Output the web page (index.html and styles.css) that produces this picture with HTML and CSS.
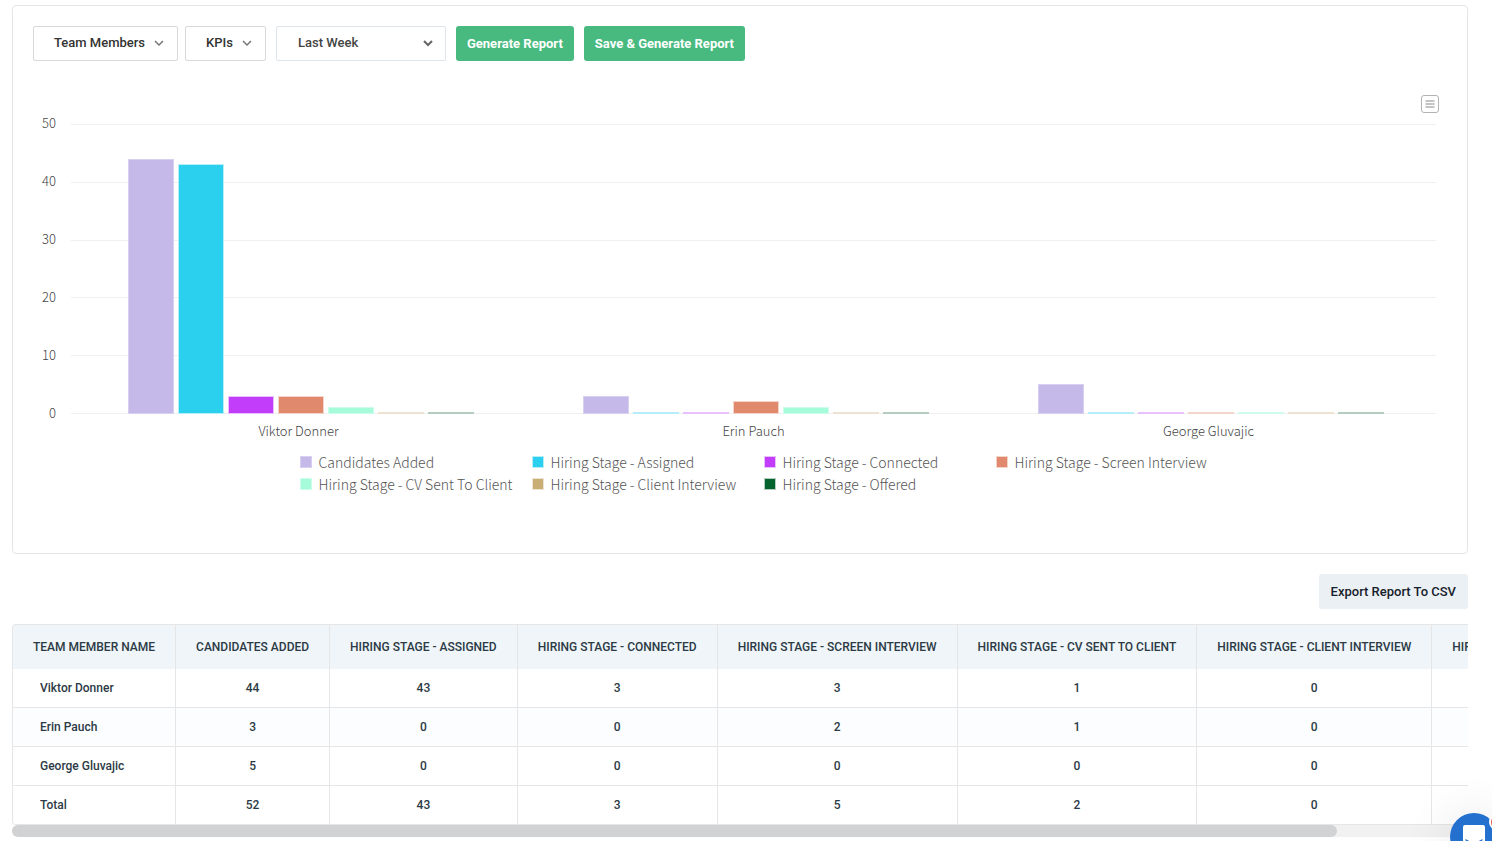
FILE: index.html
```html
<!DOCTYPE html>
<html lang="en">

<head>
    <meta charset="UTF-8">
    <title>Team Report</title>
    <link rel="stylesheet" href="styles.css">
</head>

<body>
    <main>
        <section class="card">
            <form class="filters">
                <button type="button" class="dropdown">Team Members
                    <svg width="10" height="6" viewBox="0 0 10 6"><path d="M1 1l4 4 4-4" /></svg>
                </button>
                <button type="button" class="dropdown">KPIs
                    <svg width="10" height="6" viewBox="0 0 10 6"><path d="M1 1l4 4 4-4" /></svg>
                </button>
                <div class="period">
                    <select aria-label="Period">
                        <option>Last Week</option>
                        <option>Last Month</option>
                    </select>
                    <svg width="10" height="7" viewBox="0 0 10 7"><path d="M1 1l4 4 4-4" /></svg>
                </div>
                <button type="button" class="green">Generate Report</button>
                <button type="button" class="green">Save &amp; Generate Report</button>
            </form>

            <div class="chart">
                <button type="button" class="chart-menu" aria-label="Chart menu">
                    <svg width="18" height="18" viewBox="0 0 18 18">
                        <rect x="0.5" y="0.5" width="17" height="17" rx="2.5" fill="#fff" stroke="#b3b3b3" />
                        <path d="M4.500 6h9M4.500 9h9M4.500 12h9" stroke="#c4c4c4" stroke-width="2" />
                    </svg>
                </button>
                <div class="axis">
                    <span>50</span>
                    <span>40</span>
                    <span>30</span>
                    <span>20</span>
                    <span>10</span>
                    <span>0</span>
                </div>
                <div class="plot">
                    <div class="lines"><i></i><i></i><i></i><i></i><i></i><i></i></div>
                    <div class="group">
                        <div class="bar added" style="--value: 44"></div>
                        <div class="bar assigned" style="--value: 43"></div>
                        <div class="bar connected" style="--value: 3"></div>
                        <div class="bar screen" style="--value: 3"></div>
                        <div class="bar cv" style="--value: 1"></div>
                        <div class="bar client" style="--value: 0"></div>
                        <div class="bar offered" style="--value: 0"></div>
                    </div>
                    <div class="group">
                        <div class="bar added" style="--value: 3"></div>
                        <div class="bar assigned" style="--value: 0"></div>
                        <div class="bar connected" style="--value: 0"></div>
                        <div class="bar screen" style="--value: 2"></div>
                        <div class="bar cv" style="--value: 1"></div>
                        <div class="bar client" style="--value: 0"></div>
                        <div class="bar offered" style="--value: 0"></div>
                    </div>
                    <div class="group">
                        <div class="bar added" style="--value: 5"></div>
                        <div class="bar assigned" style="--value: 0"></div>
                        <div class="bar connected" style="--value: 0"></div>
                        <div class="bar screen" style="--value: 0"></div>
                        <div class="bar cv" style="--value: 0"></div>
                        <div class="bar client" style="--value: 0"></div>
                        <div class="bar offered" style="--value: 0"></div>
                    </div>
                </div>
                <div class="names">
                    <span>Viktor Donner</span>
                    <span>Erin Pauch</span>
                    <span>George Gluvajic</span>
                </div>
                <ul class="legend">
                    <li><i class="added"></i>Candidates Added</li>
                    <li><i class="assigned"></i>Hiring Stage - Assigned</li>
                    <li><i class="connected"></i>Hiring Stage - Connected</li>
                    <li><i class="screen"></i>Hiring Stage - Screen Interview</li>
                    <li><i class="cv"></i>Hiring Stage - CV Sent To Client</li>
                    <li><i class="client"></i>Hiring Stage - Client Interview</li>
                    <li><i class="offered"></i>Hiring Stage - Offered</li>
                </ul>
            </div>
        </section>

        <div class="actions">
            <button type="button" class="export">Export Report To CSV</button>
        </div>

        <div class="table-wrap">
            <table>
                <thead>
                    <tr>
                        <th>Team Member Name</th>
                        <th>Candidates Added</th>
                        <th>Hiring Stage - Assigned</th>
                        <th>Hiring Stage - Connected</th>
                        <th>Hiring Stage - Screen Interview</th>
                        <th>Hiring Stage - CV Sent To Client</th>
                        <th>Hiring Stage - Client Interview</th>
                        <th>Hiring Stage - Offered</th>
                    </tr>
                </thead>
                <tbody>
                    <tr>
                        <td>Viktor Donner</td>
                        <td>44</td>
                        <td>43</td>
                        <td>3</td>
                        <td>3</td>
                        <td>1</td>
                        <td>0</td>
                        <td>0</td>
                    </tr>
                    <tr>
                        <td>Erin Pauch</td>
                        <td>3</td>
                        <td>0</td>
                        <td>0</td>
                        <td>2</td>
                        <td>1</td>
                        <td>0</td>
                        <td>0</td>
                    </tr>
                    <tr>
                        <td>George Gluvajic</td>
                        <td>5</td>
                        <td>0</td>
                        <td>0</td>
                        <td>0</td>
                        <td>0</td>
                        <td>0</td>
                        <td>0</td>
                    </tr>
                    <tr>
                        <td>Total</td>
                        <td>52</td>
                        <td>43</td>
                        <td>3</td>
                        <td>5</td>
                        <td>2</td>
                        <td>0</td>
                        <td>0</td>
                    </tr>
                </tbody>
            </table>
        </div>
        <div class="scroll-track">
            <div class="scroll-thumb"></div>
        </div>
    </main>

    <button type="button" class="chat" aria-label="Open chat">
        <svg width="48" height="48" viewBox="0 0 48 48">
            <path d="M15 12h18a2 2 0 0 1 2 2v23l-6-3H15a2 2 0 0 1-2-2V14a2 2 0 0 1 2-2z" fill="#fff" />
            <path d="M16 27q8 6 16 0" fill="none" stroke="#2470cf" stroke-width="1.500" stroke-linecap="round" />
        </svg>
        <span class="badge"></span>
    </button>
</body>

</html>
```
FILE: styles.css
```css
* {
    box-sizing: border-box;
}

html {
    height: 100%;
    overflow: hidden;
}

body {
    margin: 0;
    height: 100%;
    overflow: hidden;
    background-color: #fff;
    font-family: Roboto, "Liberation Sans", sans-serif;
    font-size: 13px;
    color: #2c3a45;
}

main {
    padding: 5px 24px 0 12px;
}

button,
select {
    font-family: inherit;
    cursor: pointer;
}

.card {
    border: 1px solid #e6e6e6;
    border-radius: 4px;
    padding: 20px 20px 58px;
}

/* filters */
.filters {
    display: flex;
    align-items: center;
}

.dropdown {
    display: flex;
    align-items: center;
    gap: 9px;
    height: 35px;
    margin-right: 7px;
    padding: 0 13px 2px 20px;
    background-color: #fff;
    border: 1px solid #d9d9d9;
    border-radius: 2px;
    font-size: 13px;
    font-weight: 500;
    color: #333;
}

.filters svg {
    fill: none;
    stroke: #777;
    stroke-width: 1.5;
}

.period {
    display: grid;
    align-items: center;
    width: 170px;
    margin: 0 10px 0 3px;
}

.period select,
.period svg {
    grid-area: 1 / 1;
}

.period select {
    appearance: none;
    height: 35px;
    padding: 0 30px 2px 21px;
    background-color: #fff;
    border: 1px solid #dfe5ec;
    border-radius: 2px;
    font-size: 13px;
    font-weight: 500;
    color: #444;
}

.period svg {
    justify-self: end;
    margin-right: 13px;
    stroke: #666;
    stroke-width: 2;
    pointer-events: none;
}

.green {
    height: 35px;
    margin-right: 10px;
    padding: 0 11px;
    background-color: #48ba80;
    border: 0;
    border-radius: 3px;
    font-size: 13px;
    font-weight: 700;
    color: #fff;
}

/* chart */
.chart {
    display: grid;
    grid-template-columns: 23px 1fr;
    column-gap: 15px;
    margin-top: 34px;
    padding-right: 11px;
    font-family: "Noto Sans CJK SC", "Noto Sans", sans-serif;
    font-weight: 300;
    color: #444;
}

.chart-menu {
    grid-column: 1 / 3;
    justify-self: end;
    height: 18px;
    margin: 0 -3px 11px 0;
    padding: 0;
    border: 0;
    background: none;
}

.chart-menu svg {
    display: block;
}

.axis {
    display: flex;
    flex-direction: column;
    justify-content: space-between;
    margin: -11px 0 -9px;
    font-size: 13px;
    line-height: 20px;
    text-align: right;
}

.plot {
    display: grid;
    grid-template-columns: repeat(3, 1fr);
    height: 290px;
}

.lines {
    grid-area: 1 / 1 / 2 / 4;
    display: flex;
    flex-direction: column;
    justify-content: space-between;
}

.lines i {
    height: 1px;
    background-color: #f0f0f0;
}

.group {
    grid-row: 1;
    display: flex;
    align-items: flex-end;
    gap: 4px;
    padding: 0 52px 0 57px;
}

.group:nth-child(2) {
    grid-column: 1;
}

.group:nth-child(3) {
    grid-column: 2;
}

.group:nth-child(4) {
    grid-column: 3;
}

.bar {
    flex: 1;
    height: calc(var(--value) / 50 * (100% - 1px) + 1px);
    min-height: 2px;
}

.added,
.assigned,
.connected,
.screen,
.cv,
.client,
.offered {
    border: 1px solid;
}

.added {
    background-color: #c5b9ea;
    border-color: #d8d0f1;
}

.assigned {
    background-color: #2bd0ee;
    border-color: #b5eef8;
}

.connected {
    background-color: #c23df9;
    border-color: #e8c0fb;
}

.screen {
    background-color: #e0896d;
    border-color: #f4d5cb;
}

.cv {
    background-color: #a6fcda;
    border-color: #cffdeb;
}

.client {
    background-color: #c8ad74;
    border-color: #ece3d2;
}

.offered {
    background-color: #05632d;
    border-color: #b4cdbf;
}

.names {
    grid-column: 2;
    display: grid;
    grid-template-columns: repeat(3, 1fr);
    margin-top: 7px;
    font-size: 13px;
    line-height: 20px;
    text-align: center;
}

.legend {
    grid-column: 2;
    display: grid;
    grid-template-columns: repeat(4, 212px);
    justify-content: center;
    column-gap: 20px;
    margin: 10px 0 0;
    padding: 0;
    list-style: none;
    font-size: 14px;
    line-height: 22px;
    white-space: nowrap;
    color: #555;
}

.legend li {
    display: flex;
    align-items: center;
    gap: 7px;
}

.legend i {
    flex: none;
    width: 12px;
    height: 12px;
}

/* export */
.actions {
    display: flex;
    justify-content: flex-end;
    margin: 20px 0 15px;
}

.export {
    height: 35px;
    padding: 0 12px;
    background-color: #ebf0f4;
    border: 0;
    border-radius: 3px;
    font-size: 13px;
    font-weight: 500;
    color: #17212b;
}

/* table */
.table-wrap {
    overflow-x: auto;
    scrollbar-width: none;
}

table {
    border: 1px solid #e6e6e6;
    border-right: 0;
    border-radius: 4px;
    border-spacing: 0;
    overflow: hidden;
    font-size: 12px;
    font-weight: 500;
    line-height: 18px;
    white-space: nowrap;
}

th,
td {
    padding: 10px 20px;
    border-right: 1px solid #e6e6e6;
    text-align: center;
}

th {
    padding: 13px 20px;
    background-color: #eff5f9;
    font-weight: 500;
    text-transform: uppercase;
}

td {
    border-bottom: 1px solid #e6e6e6;
}

td:first-child {
    padding-left: 27px;
    text-align: left;
}

tbody tr:nth-child(even) td {
    background-color: #fbfdff;
}

tbody tr:last-child td {
    border-bottom: 0;
    background-color: #fff;
}

.scroll-track {
    height: 12px;
    background-color: #f1f1f1;
    border-radius: 6px;
}

.scroll-thumb {
    width: 91%;
    height: 12px;
    background-color: #d1d2d3;
    border-radius: 6px;
}

/* chat */
.chat {
    position: fixed;
    right: -6px;
    bottom: -20px;
    width: 48px;
    height: 48px;
    padding: 0;
    border: 0;
    border-radius: 50%;
    background-color: #2470cf;
    box-shadow: 0 2px 50px rgba(0, 0, 0, 0.12);
}

.chat svg {
    display: block;
}

.badge {
    position: absolute;
    top: 0;
    right: -11px;
    width: 20px;
    height: 18px;
    border: 2px solid #fff;
    border-radius: 9px;
    background-color: #e5484d;
}
```
